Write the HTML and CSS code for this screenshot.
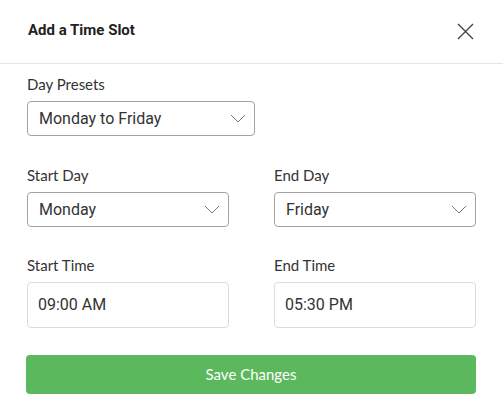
FILE: index.html
```html
<!DOCTYPE html>
<html>
<head>
<meta charset="utf-8">
<link rel="stylesheet" href="styles.css">
</head>
<body>
<div class="modal">
  <div class="modal-header">
    <h2 class="title">Add a Time Slot</h2>
    <button class="close" aria-label="Close">
      <svg width="17" height="17" viewBox="0 0 17 17"><path d="M1 1 L16 16 M16 1 L1 16" stroke="#444" stroke-width="1.4" fill="none"/></svg>
    </button>
  </div>
  <div class="modal-body">
    <div class="field">
      <label class="label">Day Presets</label>
      <div class="select select-wide">
        <span>Monday to Friday</span>
        <svg class="chev" width="16" height="9" viewBox="0 0 16 9"><path d="M1 1 L8 8 L15 1" stroke="#777" stroke-width="1" fill="none"/></svg>
      </div>
    </div>
    <div class="row">
      <div class="field">
        <label class="label">Start Day</label>
        <div class="select">
          <span>Monday</span>
          <svg class="chev" width="16" height="9" viewBox="0 0 16 9"><path d="M1 1 L8 8 L15 1" stroke="#777" stroke-width="1" fill="none"/></svg>
        </div>
      </div>
      <div class="field">
        <label class="label">End Day</label>
        <div class="select">
          <span>Friday</span>
          <svg class="chev" width="16" height="9" viewBox="0 0 16 9"><path d="M1 1 L8 8 L15 1" stroke="#777" stroke-width="1" fill="none"/></svg>
        </div>
      </div>
    </div>
    <div class="row">
      <div class="field">
        <label class="label">Start Time</label>
        <div class="input">09:00 AM</div>
      </div>
      <div class="field">
        <label class="label">End Time</label>
        <div class="input">05:30 PM</div>
      </div>
    </div>
    <button class="save">Save Changes</button>
  </div>
</div>
</body>
</html>
```
FILE: styles.css
```css
* { box-sizing: border-box; }
html, body { margin: 0; padding: 0; background: #fff; }
body { width: 503px; height: 409px; overflow: hidden; }
.modal { width: 503px; }
.modal-header {
  height: 64px;
  border-bottom: 1px solid #e5e5e5;
  display: flex;
  align-items: center;
  justify-content: space-between;
  padding: 0 28px 4px 28px;
}
.title {
  margin: 0;
  font-family: Roboto, "Liberation Sans", sans-serif;
  font-weight: 700;
  font-size: 15px;
  color: #222;
}
.close {
  border: 0;
  background: none;
  padding: 0;
  margin-right: 1px;
  display: flex;
  margin-top: 3px;
}
.modal-body { padding: 11px 27px 0 27px; }
.field { display: flex; flex-direction: column; }
.label {
  font-family: Lato, "Open Sans", sans-serif;
  font-size: 15px;
  line-height: 19px;
  color: #333;
  margin-bottom: 7px;
}
.select {
  height: 35px;
  border: 1px solid #a3a3a3;
  border-radius: 4px;
  display: flex;
  align-items: center;
  justify-content: space-between;
  padding: 0 8px 1px 11px;
  font-family: Roboto, "Liberation Sans", sans-serif;
  font-size: 16px;
  color: #333;
}
.select-wide { width: 228px; }
.chev { margin-top: 1px; }
.row {
  display: grid;
  grid-template-columns: 202px 202px;
  column-gap: 45px;
  margin-top: 30px;
}
.row + .row { margin-top: 29px; }
.input {
  height: 46px;
  border: 1px solid #dcdcdc;
  border-radius: 4px;
  display: flex;
  align-items: center;
  padding: 0 10px 1px 10px;
  font-family: Roboto, "Liberation Sans", sans-serif;
  font-size: 16px;
  color: #333;
}
.save {
  display: block;
  margin: 27px 0 0 -1px;
  width: 450px;
  height: 39px;
  border: 0;
  border-radius: 4px;
  background: #5cb85c;
  color: #fff;
  font-family: Lato, "Open Sans", sans-serif;
  font-size: 15px;
  padding: 0 0 2px 0;
}
```
